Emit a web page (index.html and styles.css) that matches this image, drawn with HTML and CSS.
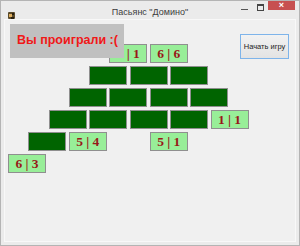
FILE: index.html
```html
<!DOCTYPE html>
<html lang="ru">
<head>
    <meta charset="UTF-8">
    <meta name="viewport" content="width=device-width, initial-scale=1.0">
    <title>Пасьянс "Домино"</title>
    <link rel="stylesheet" href="styles.css">
</head>
<body>
    <div class="window">
        <div class="titlebar">
            <div class="app-icon">
                <svg width="9" height="9" viewBox="0 0 9 9">
                    <rect x="1" y="1" width="7" height="7" rx="1" fill="#5a4a2a"/>
                    <rect x="2" y="3" width="3" height="3" fill="#e0b060"/>
                    <rect x="5" y="2" width="2" height="2" fill="#2a2010"/>
                    <rect x="4" y="6" width="3" height="2" fill="#2a2010"/>
                </svg>
            </div>
            <div class="title">Пасьянс "Домино"</div>
            <div class="controls">
                <span class="ctl-min"></span>
                <span class="ctl-max"></span>
                <span class="ctl-close">&#215;</span>
            </div>
        </div>

        <div class="frame-body">
            <div class="client">
                <div class="board" id="board"></div>
                <div class="message">Вы проиграли :(</div>
                <button class="start-btn" type="button">Начать игру</button>
            </div>
        </div>
    </div>

    <script>
        // Pyramid of dominoes: "x" = face down, "" = empty slot, text = face up
        var rows = [
            ["4 | 1", "6 | 6"],
            ["x", "x", "x"],
            ["x", "x", "x", "x"],
            ["x", "x", "x", "x", "1 | 1"],
            ["x", "5 | 4", "", "5 | 1", "", ""],
            ["6 | 3", "", "", "", "", "", ""]
        ];

        function drawBoard() {
            var board = document.getElementById("board");
            board.innerHTML = "";

            for (var r = 0; r < rows.length; r++) {
                var row = document.createElement("div");
                row.className = "row row-" + (r + 1);

                for (var i = 0; i < rows[r].length; i++) {
                    var cell = document.createElement("div");
                    var value = rows[r][i];
                    if (value === "x") {
                        cell.className = "tile down";
                    } else if (value === "") {
                        cell.className = "tile empty";
                    } else {
                        cell.className = "tile up";
                        cell.textContent = value;
                    }
                    row.appendChild(cell);
                }
                board.appendChild(row);
            }
        }

        drawBoard();
    </script>
</body>
</html>
```

FILE: styles.css
```css
body {
    margin: 0;
    background: #ffffff;
}

.window {
    width: 300px;
    height: 246px;
    box-sizing: border-box;
    border: 1px solid #b4b4b4;
    background-color: #ebebeb;
    display: flex;
    flex-direction: column;
    font-family: 'Liberation Sans', Arial, sans-serif;
}

.titlebar {
    height: 18px;
    display: grid;
    grid-template-columns: 1fr auto 1fr;
    align-items: start;
}

.app-icon {
    margin: 5px 0 0 6px;
    height: 9px;
}

.title {
    font-size: 9px;
    color: #3c3c3c;
    padding-top: 6px;
    white-space: nowrap;
}

.controls {
    justify-self: end;
    display: flex;
    align-items: flex-start;
}

.ctl-min {
    width: 7px;
    height: 1px;
    margin: 8px 9px 0 0;
    background-color: #555;
}

.ctl-max {
    width: 5px;
    height: 4px;
    margin: 3px 4px 0 0;
    border: 1px solid #444;
    border-top-width: 2px;
}

.ctl-close {
    width: 27px;
    height: 9px;
    margin-right: 4px;
    background-color: #c75050;
    color: #fff;
    font-size: 9px;
    line-height: 9px;
    text-align: center;
    font-weight: bold;
}

.frame-body {
    flex: 1;
    padding: 0 3px 3px 3px;
    display: flex;
}

.client {
    flex: 1;
    border: 1px solid #f8f8f8;
    background-color: #f0f0f0;
    display: grid;
    grid-template-columns: 1fr;
    grid-template-rows: 1fr;
}

.board,
.message,
.start-btn {
    grid-area: 1 / 1;
}

.board {
    margin-top: 24px;
    padding-left: 3px;
    display: flex;
    flex-direction: column;
    gap: 3px;
}

.row {
    display: flex;
    gap: 2.5px;
}

.row-1 { margin-left: 101.25px; }
.row-2 { margin-left: 81px; }
.row-3 { margin-left: 60.75px; }
.row-4 { margin-left: 40.5px; }
.row-5 { margin-left: 20.25px; }
.row-6 { margin-left: 0; }

.tile {
    width: 38px;
    height: 19px;
    box-sizing: border-box;
    border: 1px solid #8f8f8f;
    font-family: 'Liberation Serif', 'Times New Roman', serif;
    font-weight: bold;
    font-size: 13.5px;
    line-height: 17px;
    text-align: center;
    color: #981818;
    white-space: pre;
}

.tile.up {
    background-color: #98ee98;
}

.tile.down {
    background-color: #006400;
}

.tile.empty {
    visibility: hidden;
}

.message {
    margin: 4px 0 0 5px;
    width: 114px;
    height: 34px;
    box-sizing: border-box;
    padding: 9px 0 0 7px;
    background-color: #c0c0c0;
    color: #f01818;
    font-weight: bold;
    font-size: 12.5px;
    align-self: start;
    justify-self: start;
    white-space: nowrap;
}

.start-btn {
    justify-self: end;
    align-self: start;
    margin: 14px 6px 0 0;
    width: 49px;
    height: 25px;
    padding: 0;
    border: 1px solid #7eb4ea;
    border-radius: 0;
    background: linear-gradient(#f2f2f2, #e3e3e3);
    font-family: 'Liberation Sans', Arial, sans-serif;
    font-size: 7.5px;
    color: #222;
}
```
